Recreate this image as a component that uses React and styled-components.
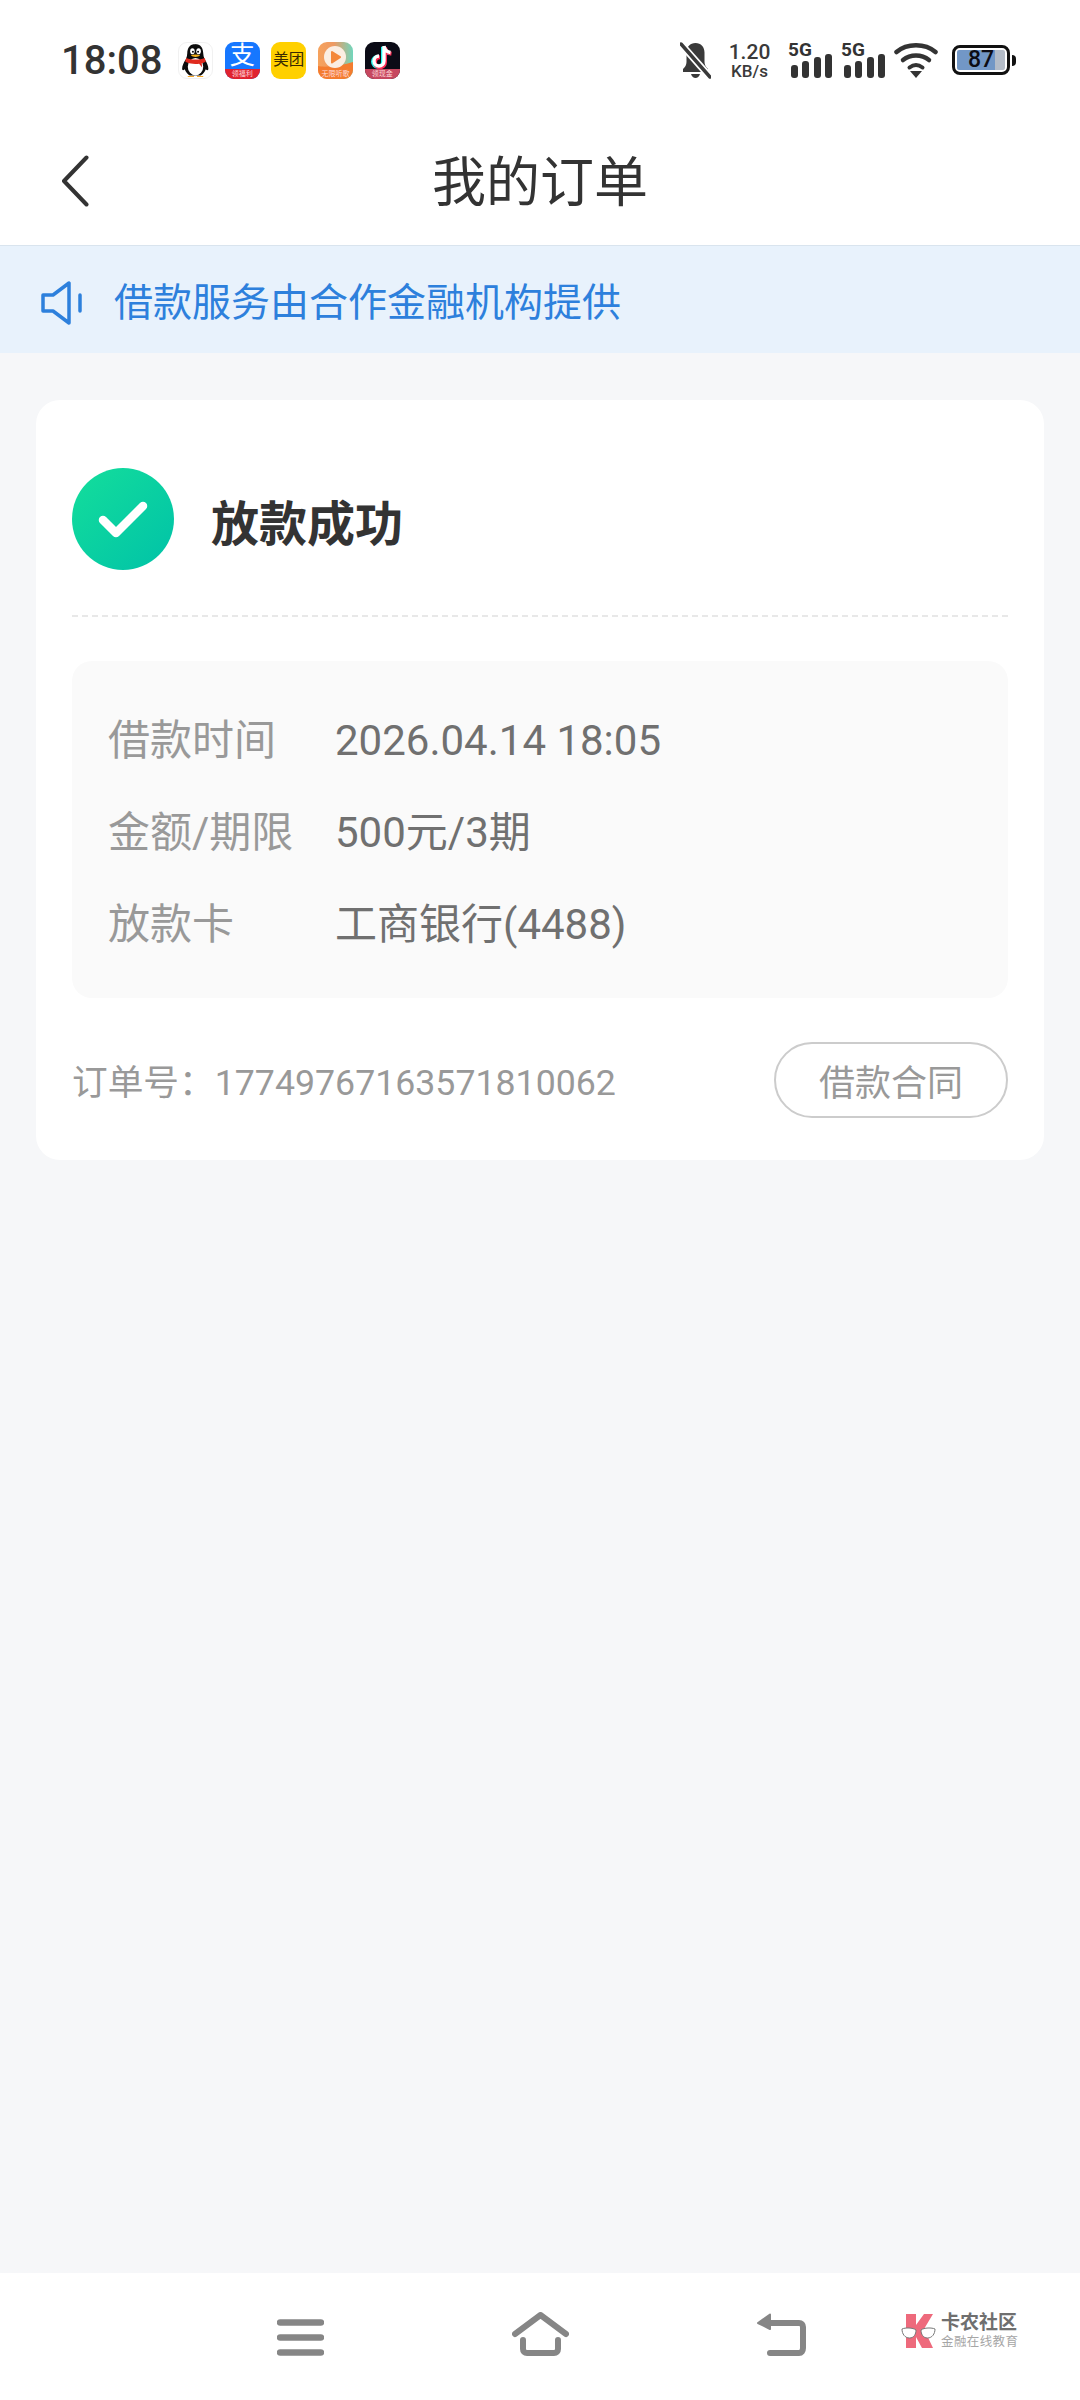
import React from "react";
import styled, { createGlobalStyle } from "styled-components";

const cjk = `Roboto, "Noto Sans CJK SC", sans-serif`;

const GlobalStyle = createGlobalStyle`
    html, body {
        margin: 0;
        padding: 0;
        background: #f6f7f9;
        font-family: ${cjk};
    }
    * {
        box-sizing: border-box;
    }
`;

const Page = styled.div`
    width: 1080px;
    height: 2400px;
    display: flex;
    flex-direction: column;
    background: #f6f7f9;
    overflow: hidden;
`;

const Glyph = styled.svg`
    flex: none;
    margin-top: ${(p) => p.$top || 0}px;
    margin-left: ${(p) => p.$left || 0}px;
`;

/* status bar */
const StatusBar = styled.div`
    height: 116px;
    padding: 42px 64px 0 61px;
    display: flex;
    align-items: flex-start;
    background: #fff;
    color: #333;
`;

const Clock = styled.div`
    width: 117px;
    flex: none;
    margin-top: -4px;
    font-size: 40px;
    line-height: 46px;
    font-weight: 500;
    white-space: nowrap;
`;

const AppIcons = styled.div`
    display: flex;
    gap: 11.7px;
`;

const AppIcon = styled.div`
    width: 35px;
    height: 37px;
    border-radius: 9px;
    overflow: hidden;
    flex: none;
    position: relative;
    display: flex;
    flex-direction: column;
    align-items: center;
    justify-content: center;
    background: ${(p) => p.$bg || "#fff"};
    border: ${(p) => (p.$outlined ? "1px solid #f1f1f1" : "none")};
`;

const AppStrip = styled.div`
    position: absolute;
    left: 0;
    right: 0;
    bottom: 0;
    height: 10px;
    background: ${(p) => p.$bg};
    color: #ffd9d9;
    font-size: 7px;
    line-height: 10px;
    text-align: center;
    white-space: nowrap;
`;

const AlipayGlyph = styled.span`
    color: #fff;
    font-size: 25px;
    line-height: 25px;
    margin-bottom: 10px;
`;

const MeituanGlyph = styled.span`
    color: #3a2a00;
    font-size: 15.5px;
    line-height: 37px;
    white-space: nowrap;
`;

const StatusRight = styled.div`
    margin-left: auto;
    display: flex;
    align-items: flex-start;
`;

const Speed = styled.div`
    width: 41px;
    margin: 0 21px 0 18px;
    display: flex;
    flex-direction: column;
    align-items: center;
    color: #3a3a3a;
    font-weight: 500;
`;

const SpeedValue = styled.span`
    font-size: 21px;
    line-height: 21px;
`;

const SpeedUnit = styled.span`
    font-size: 17px;
    line-height: 17px;
    white-space: nowrap;
`;

const Signal = styled.div`
    width: 41px;
    margin-right: 12px;
    display: flex;
    flex-direction: column;
    color: #333;
`;

const SignalLabel = styled.span`
    font-size: 19px;
    line-height: 15px;
    font-weight: 700;
    margin: 0 0 -3px -3px;
`;

const SignalBars = styled.div`
    display: flex;
    align-items: flex-end;
    justify-content: space-between;
    height: 24px;
`;

const SignalBar = styled.span`
    width: 7px;
    height: ${(p) => p.$h}px;
    border-radius: 3px;
    background: #333;
`;

const Battery = styled.div`
    display: flex;
    align-items: center;
    margin: 3px 0 0 14px;
`;

const BatteryBody = styled.div`
    width: 58px;
    height: 30px;
    border: 3px solid #111;
    border-radius: 8px;
    padding: 2px;
    display: flex;
`;

const BatteryFill = styled.div`
    flex: 1;
    border-radius: 2px;
    background: linear-gradient(90deg, #7297c6 0 80%, #b4bcc8 80% 100%);
    color: #0c0c14;
    font-size: 23px;
    line-height: 20px;
    font-weight: 500;
    text-align: center;
`;

const BatteryNub = styled.span`
    width: 4px;
    height: 11px;
    margin-left: 2px;
    background: #111;
    border-radius: 0 4px 4px 0;
`;

/* title bar */
const Header = styled.div`
    height: 129px;
    padding: 0 61px;
    display: grid;
    grid-template-columns: 1fr auto 1fr;
    align-items: center;
    background: #fff;
`;

const HeaderTitle = styled.h1`
    margin: 6px 0 0;
    color: #333;
    font-size: 54px;
    font-weight: 400;
    line-height: 64px;
`;

const Notice = styled.div`
    height: 108px;
    padding: 6px 0 0 41px;
    display: flex;
    align-items: center;
    gap: 31px;
    background: #e8f2fc;
    border-top: 1px solid #d9e4ee;
    color: #2d80dc;
    font-size: 39px;
    line-height: 50px;
`;

/* order card */
const Card = styled.section`
    margin: 47px 36px 0 36px;
    height: 760px;
    padding: 0 36px;
    border-radius: 24px;
    background: #fff;
    display: flex;
    flex-direction: column;
`;

const ResultRow = styled.div`
    height: 217px;
    flex: none;
    display: flex;
    align-items: flex-start;
    gap: 37px;
    padding-top: 68px;
    border-bottom: 2px dashed #e8e8e8;
`;

const ResultBadge = styled.div`
    width: 102px;
    height: 102px;
    flex: none;
    border-radius: 50%;
    background: linear-gradient(135deg, #14de9b, #00c2a8);
    display: flex;
    align-items: center;
    justify-content: center;
`;

const ResultTitle = styled.div`
    margin-top: 29px;
    color: #333;
    font-size: 48px;
    line-height: 56px;
    font-weight: 700;
`;

const InfoBox = styled.div`
    margin-top: 44px;
    height: 337px;
    flex: none;
    padding: 55px 36px 0;
    border-radius: 20px;
    background: #fafafa;
    display: flex;
    flex-direction: column;
    gap: 42px;
`;

const InfoRow = styled.div`
    display: flex;
    height: 50px;
    align-items: center;
    font-size: 42px;
    line-height: 50px;
    white-space: nowrap;
`;

const InfoLabel = styled.span`
    width: 227px;
    flex: none;
    color: #999;
`;

const InfoValue = styled.span`
    color: #707070;
`;

const CardFooter = styled.div`
    margin-top: 44px;
    display: flex;
    align-items: center;
    justify-content: space-between;
`;

const OrderNo = styled.div`
    padding-top: 5px;
    color: #999;
    font-size: 35.7px;
    line-height: 46px;
    white-space: nowrap;
`;

const OutlineButton = styled.div`
    width: 234px;
    height: 76px;
    padding-top: 7px;
    border: 2px solid #cccccc;
    border-radius: 38px;
    color: #999;
    font-size: 36px;
    line-height: 66px;
    text-align: center;
    white-space: nowrap;
`;

/* navigation bar */
const NavBar = styled.nav`
    margin-top: auto;
    height: 127px;
    padding: 46px 0 0 277px;
    display: flex;
    align-items: flex-start;
    gap: 188px;
    background: #fff;
`;

const Watermark = styled.div`
    margin: -6px 0 0 -93px;
    display: flex;
    align-items: center;
    gap: 5px;
`;

const WatermarkText = styled.div`
    display: flex;
    flex-direction: column;
    align-items: flex-start;
    gap: 2px;
`;

const WatermarkTitle = styled.span`
    font-size: 19px;
    line-height: 20px;
    font-weight: 700;
    color: #6f6f6f;
    white-space: nowrap;
`;

const WatermarkSub = styled.span`
    font-size: 12.5px;
    line-height: 14px;
    color: #a6a6a6;
    letter-spacing: 0.4px;
    white-space: nowrap;
`;

const QQIcon = () => (
    <AppIcon $outlined>
        <svg width="33" height="35" viewBox="2 1 29 34">
            <path d="M16.5 2C11 2 8.5 6 8.5 11c0 2-.5 4-1.5 6-2 3-3.5 6-3.5 9 0 1.5 1 2 2.5 .5 1 3 3 5 5 6h10.500c2-1 4-3 5-6 1.500 1.500 2.500 1 2.500-.5 0-3-1.500-6-3.500-9-1-2-1.500-4-1.500-6 0-5-2.500-9-8-9z" fill="#0c0c0c" />
            <ellipse cx="16.500" cy="24" rx="7.500" ry="8.500" fill="#fff" />
            <path d="M7.500 15.500c5 2 13 2 18 0l1 3.500c-1.500 1-3 1.500-4 1.700l.5 4-3-3.500c-2.500.3-6 .3-8-.2-2-.5-4-1-5.500-2z" fill="#e02a1e" />
            <ellipse cx="13.500" cy="9" rx="2.200" ry="3" fill="#fff" />
            <ellipse cx="19.500" cy="9" rx="2.200" ry="3" fill="#fff" />
            <circle cx="14" cy="9.500" r="1" fill="#111" />
            <circle cx="19" cy="9.500" r="1" fill="#111" />
            <path d="M12 13c2.500-1 6.500-1 9 0-2 2-7 2-9 0z" fill="#f5b21a" />
            <path d="M9 33.500h6M18 33.500h6" stroke="#f5a623" strokeWidth="1" />
        </svg>
    </AppIcon>
);

const VideoIcon = () => (
    <AppIcon $bg="linear-gradient(90deg, #f6a25c, #ee9a63 45%, #70d6bd)">
        <svg width="35" height="37" viewBox="0 0 35 37">
            <path d="M0 24c8 2 26-1 35-4v17H0z" fill="#f47c2f" />
            <circle cx="17" cy="15" r="11" fill="#fbeee2" />
            <path d="M14 10l8 5.200-8 5.200z" fill="#f4883a" strokeLinejoin="round" stroke="#f4883a" strokeWidth="2" />
        </svg>
        <AppStrip $bg="transparent">无限听歌</AppStrip>
    </AppIcon>
);

const TikTokIcon = () => (
    <AppIcon $bg="#0b0b16">
        <svg width="35" height="37" viewBox="0 0 35 37">
            <path d="M19 4v15a5 5 0 1 1-5-5M19 4c.5 3.500 3 6 6.500 6.500" fill="none" stroke="#25f4ee" strokeWidth="4" transform="translate(-1 .8)" />
            <path d="M19 4v15a5 5 0 1 1-5-5M19 4c.5 3.500 3 6 6.500 6.500" fill="none" stroke="#fe2c55" strokeWidth="4" transform="translate(1 1.200)" />
            <path d="M19 4v15a5 5 0 1 1-5-5M19 4c.5 3.500 3 6 6.500 6.500" fill="none" stroke="#fff" strokeWidth="3.400" />
        </svg>
        <AppStrip $bg="#c6475f">领现金</AppStrip>
    </AppIcon>
);

const BellOff = () => (
    <Glyph width="31" height="37" viewBox="0 0 31 37">
        <path d="M15.500 1c-5.500 0-9 4-9 9.500V20c0 3-1.500 5-3.500 7v3h25v-3c-2-2-3.500-4-3.500-7v-9.500C24.500 5 21 1 15.500 1z" fill="#3a3a3a" />
        <path d="M11 32h9c-.8 2.500-2.500 4-4.500 4S11.800 34.500 11 32z" fill="#3a3a3a" />
        <path d="M0 1l30 34" stroke="#fff" strokeWidth="7" />
        <path d="M1 2l29 33" stroke="#3a3a3a" strokeWidth="3.500" strokeLinecap="round" />
    </Glyph>
);

const Wifi = () => (
    <Glyph width="44" height="36" viewBox="0 0 44 36" $left={-3}>
        <path d="M2.500 10C13 1 31 1 41.500 10" fill="none" stroke="#333" strokeWidth="4.500" strokeLinecap="round" />
        <path d="M9 18c7.500-6 18.500-6 26 0" fill="none" stroke="#333" strokeWidth="4.500" strokeLinecap="round" />
        <path d="M15.500 25.500c4-3 9-3 13 0" fill="none" stroke="#333" strokeWidth="4" strokeLinecap="round" />
        <path d="M16 29h12l-6 7z" fill="#333" />
    </Glyph>
);

const Chevron = () => (
    <svg width="28" height="52" viewBox="0 0 28 52">
        <path d="M25.500 2.500L3 26l22.500 23.500" fill="none" stroke="#333" strokeWidth="4" strokeLinecap="round" strokeLinejoin="round" />
    </svg>
);

const Speaker = () => (
    <Glyph width="42" height="44" viewBox="0 0 42 44">
        <path d="M2 14h10L28 2v40L12 30H2z" fill="none" stroke="#2d80dc" strokeWidth="3.500" strokeLinejoin="round" />
        <path d="M39 14v16" stroke="#2d80dc" strokeWidth="3.500" strokeLinecap="round" />
    </Glyph>
);

const MenuIcon = () => (
    <svg width="47" height="37" viewBox="0 0 47 37">
        <path d="M3 3.500h41M3 18.500h41M3 33.500h41" stroke="#868686" strokeWidth="6.500" strokeLinecap="round" />
    </svg>
);

const HomeIcon = () => (
    <Glyph width="57" height="44" viewBox="0 0 57 44" $top={-7}>
        <path d="M3 22L28.500 3 54 22" fill="none" stroke="#868686" strokeWidth="6" strokeLinecap="round" strokeLinejoin="round" />
        <path d="M11 28v9c0 2.500 1.500 4 4 4h27c2.500 0 4-1.500 4-4v-9" fill="none" stroke="#868686" strokeWidth="6" strokeLinecap="round" />
    </Glyph>
);

const ReturnIcon = () => (
    <Glyph width="49" height="43" viewBox="0 0 49 43" $top={-6}>
        <path d="M10 10h32c2.500 0 4 1.500 4 4v21c0 3-1.500 5-4 5H13" fill="none" stroke="#868686" strokeWidth="6" strokeLinecap="round" />
        <path d="M13 1.500L1 10l12 6z" fill="#868686" stroke="#868686" strokeWidth="2" strokeLinejoin="round" />
    </Glyph>
);

const LogoMark = () => (
    <Glyph width="35" height="34" viewBox="0 0 35 34">
        <path d="M5 0h10v11L23 0h9l-9 15 9 19H21l-6-11v11H5z" fill="#ee6a7c" />
        <path d="M1 15c3-1.500 11-1.500 14 1 0 4-2 8-6.500 8C4 24 1 20 1 15z" fill="#fff" stroke="#777" strokeWidth="1" />
        <path d="M20 16c3-2.500 11-2.500 14-1 0 5-3 9-7.500 9C22 24 20 20 20 16z" fill="#fff" stroke="#777" strokeWidth="1" />
    </Glyph>
);

const rows = [
    { label: "借款时间", value: "2026.04.14 18:05" },
    { label: "金额/期限", value: "500元/3期" },
    { label: "放款卡", value: "工商银行(4488)" },
];

const signalHeights = [13, 17, 21, 24];

export default function App() {
    return (
        <Page>
            <GlobalStyle />
            <StatusBar>
                <Clock>18:08</Clock>
                <AppIcons>
                    <QQIcon />
                    <AppIcon $bg="#1677ff">
                        <AlipayGlyph>支</AlipayGlyph>
                        <AppStrip $bg="#e0222f">领福利</AppStrip>
                    </AppIcon>
                    <AppIcon $bg="#ffd000">
                        <MeituanGlyph>美团</MeituanGlyph>
                    </AppIcon>
                    <VideoIcon />
                    <TikTokIcon />
                </AppIcons>
                <StatusRight>
                    <BellOff />
                    <Speed>
                        <SpeedValue>1.20</SpeedValue>
                        <SpeedUnit>KB/s</SpeedUnit>
                    </Speed>
                    {[0, 1].map((n) => (
                        <Signal key={n}>
                            <SignalLabel>5G</SignalLabel>
                            <SignalBars>
                                {signalHeights.map((h) => (
                                    <SignalBar key={h} $h={h} />
                                ))}
                            </SignalBars>
                        </Signal>
                    ))}
                    <Wifi />
                    <Battery>
                        <BatteryBody>
                            <BatteryFill>87</BatteryFill>
                        </BatteryBody>
                        <BatteryNub />
                    </Battery>
                </StatusRight>
            </StatusBar>

            <Header>
                <Chevron />
                <HeaderTitle>我的订单</HeaderTitle>
            </Header>

            <Notice>
                <Speaker />
                借款服务由合作金融机构提供
            </Notice>

            <Card>
                <ResultRow>
                    <ResultBadge>
                        <svg width="50" height="38" viewBox="0 0 50 38">
                            <path d="M5 20l13 13L45 6" fill="none" stroke="#fff" strokeWidth="8.500" strokeLinecap="round" strokeLinejoin="round" />
                        </svg>
                    </ResultBadge>
                    <ResultTitle>放款成功</ResultTitle>
                </ResultRow>

                <InfoBox>
                    {rows.map((row) => (
                        <InfoRow key={row.label}>
                            <InfoLabel>{row.label}</InfoLabel>
                            <InfoValue>{row.value}</InfoValue>
                        </InfoRow>
                    ))}
                </InfoBox>

                <CardFooter>
                    <OrderNo>订单号：17749767163571810062</OrderNo>
                    <OutlineButton>借款合同</OutlineButton>
                </CardFooter>
            </Card>

            <NavBar>
                <MenuIcon />
                <HomeIcon />
                <ReturnIcon />
                <Watermark>
                    <LogoMark />
                    <WatermarkText>
                        <WatermarkTitle>卡农社区</WatermarkTitle>
                        <WatermarkSub>金融在线教育</WatermarkSub>
                    </WatermarkText>
                </Watermark>
            </NavBar>
        </Page>
    );
}
